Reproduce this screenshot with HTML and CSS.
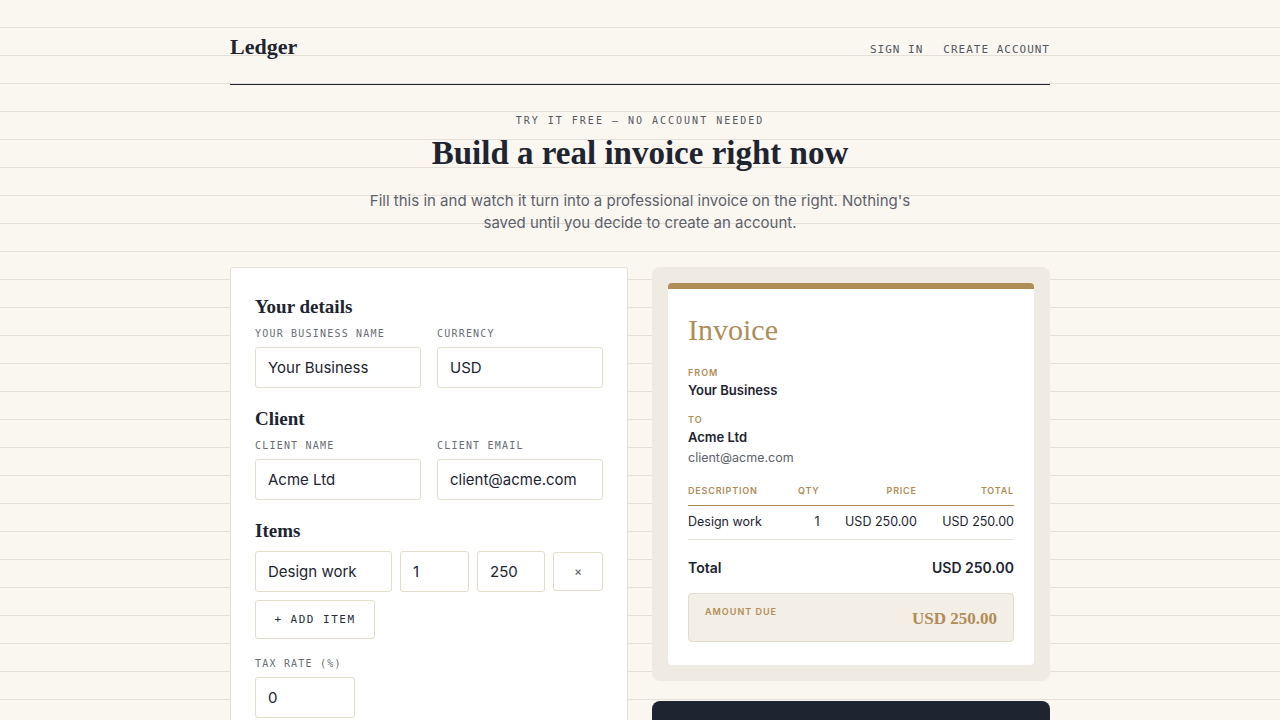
FILE: index.html
```html
<!DOCTYPE html>
<html lang="en">
<head>
<meta charset="utf-8">
<title>Ledger — Build a real invoice</title>
<link rel="stylesheet" href="styles.css">
</head>
<body>
<div class="page">
  <header class="topbar">
    <div class="logo">Ledger</div>
    <nav class="nav">
      <a href="#">Sign in</a>
      <a href="#">Create account</a>
    </nav>
  </header>

  <section class="hero">
    <div class="eyebrow">Try it free — no account needed</div>
    <h1>Build a real invoice right now</h1>
    <p>Fill this in and watch it turn into a professional invoice on the right. Nothing's saved until you decide to create an account.</p>
  </section>

  <main class="builder">
    <form class="form-card">
      <h2>Your details</h2>
      <div class="row2">
        <label class="field"><span class="lbl">Your business name</span><input class="inp" value="Your Business"></label>
        <label class="field"><span class="lbl">Currency</span><input class="inp" value="USD"></label>
      </div>
      <h2>Client</h2>
      <div class="row2">
        <label class="field"><span class="lbl">Client name</span><input class="inp" value="Acme Ltd"></label>
        <label class="field"><span class="lbl">Client email</span><input class="inp" value="client@acme.com"></label>
      </div>
      <h2>Items</h2>
      <div class="item-row">
        <input class="inp desc" value="Design work">
        <input class="inp qty" value="1">
        <input class="inp price" value="250">
        <button type="button" class="remove">×</button>
      </div>
      <button type="button" class="add">+ Add item</button>
      <label class="field tax"><span class="lbl">Tax rate (%)</span><input class="inp tax-inp" value="0"></label>
    </form>

    <div class="right">
      <div class="preview">
        <div class="invoice">
          <div class="inv-title">Invoice</div>
          <div class="party">
            <div class="ilbl">From</div>
            <div class="pname">Your Business</div>
          </div>
          <div class="party">
            <div class="ilbl">To</div>
            <div class="pname">Acme Ltd</div>
            <div class="pmail">client@acme.com</div>
          </div>
          <table class="lines">
            <thead>
              <tr><th class="l">Description</th><th class="r">Qty</th><th class="r">Price</th><th class="r">Total</th></tr>
            </thead>
            <tbody>
              <tr><td class="l">Design work</td><td class="r">1</td><td class="r">USD 250.00</td><td class="r">USD 250.00</td></tr>
            </tbody>
          </table>
          <div class="total"><span>Total</span><span>USD 250.00</span></div>
          <div class="due"><span class="due-lbl">Amount due</span><span class="due-val">USD 250.00</span></div>
        </div>
      </div>
      <div class="cta"></div>
    </div>
  </main>
</div>
</body>
</html>
```

FILE: styles.css
```css
* { box-sizing: border-box; }
html, body { margin: 0; padding: 0; }
body {
  background-color: #faf7f0;
  background-image: repeating-linear-gradient(to bottom, transparent 0, transparent 27px, #e4e0d7 27px, #e4e0d7 28px);
  font-family: Inter, "Noto Sans", sans-serif;
  color: #1e2430;
  height: 720px;
  overflow: hidden;
}
.page { width: 820px; margin: 0 auto; }

.topbar {
  display: flex;
  justify-content: space-between;
  align-items: center;
  height: 85px;
  padding-top: 10px;
  border-bottom: 1px solid #1e2430;
}
.logo {
  font-family: "Liberation Serif", "DejaVu Serif", serif;
  font-weight: bold;
  font-size: 22px;
  line-height: 28px;
}
.nav { display: flex; gap: 20px; margin-top: 4px; }
.nav a {
  font-family: "DejaVu Sans Mono", "Liberation Mono", monospace;
  font-size: 11px;
  letter-spacing: 1px;
  text-transform: uppercase;
  color: #545863;
  text-decoration: none;
}

.hero { text-align: center; padding-top: 29px; }
.eyebrow {
  font-family: "DejaVu Sans Mono", "Liberation Mono", monospace;
  font-size: 10px;
  letter-spacing: 2px;
  text-transform: uppercase;
  color: #545863;
  line-height: 14px;
}
.hero h1 {
  font-family: "Liberation Serif", "DejaVu Serif", serif;
  font-size: 33px;
  font-weight: bold;
  margin: 6px 0 0;
  line-height: 38px;
}
.hero p {
  width: 550px;
  margin: 18px auto 0;
  font-size: 15px;
  line-height: 22px;
  color: #5d616b;
}

.builder {
  display: grid;
  grid-template-columns: 398px 398px;
  justify-content: space-between;
  margin-top: 33px;
  align-items: start;
}

.form-card {
  background: #fff;
  border: 1px solid #e6e0d2;
  border-radius: 3px;
  padding: 27px 24px 40px;
}
.form-card h2 {
  font-family: "Liberation Serif", "DejaVu Serif", serif;
  font-size: 19px;
  font-weight: bold;
  margin: 0 0 8px;
  line-height: 24px;
}
.row2 {
  display: grid;
  grid-template-columns: 1fr 1fr;
  gap: 16px;
  margin-bottom: 19px;
}
.field { display: flex; flex-direction: column; }
.lbl {
  font-family: "DejaVu Sans Mono", "Liberation Mono", monospace;
  font-size: 10px;
  letter-spacing: 1.2px;
  text-transform: uppercase;
  color: #6a6d75;
  line-height: 14px;
  margin-bottom: 6px;
}
.inp {
  height: 41px;
  border: 1px solid #e3ddcc;
  border-radius: 3px;
  padding: 0 12px;
  font-family: Inter, "Noto Sans", sans-serif;
  font-size: 15px;
  color: #1e2430;
  background: #fff;
  width: 100%;
  min-width: 0;
}
.item-row {
  display: grid;
  grid-template-columns: 137px 69px 68px 50px;
  gap: 8px;
  align-items: center;
}
.remove {
  height: 39px;
  border: 1px solid #e3ddcc;
  border-radius: 3px;
  background: #fff;
  font-size: 12px;
  color: #4a4e57;
  font-family: "DejaVu Sans Mono", monospace;
}
.add {
  margin-top: 8px;
  width: 120px;
  height: 39px;
  border: 1px solid #e3ddcc;
  border-radius: 3px;
  background: #fff;
  font-family: "DejaVu Sans Mono", "Liberation Mono", monospace;
  font-size: 11px;
  letter-spacing: 1.5px;
  text-transform: uppercase;
  color: #2a2e37;
}
.tax { margin-top: 18px; }
.tax-inp { width: 100px; }

.right { display: flex; flex-direction: column; gap: 20px; }
.preview {
  background: #efeae2;
  border-radius: 8px;
  padding: 16px;
}
.invoice {
  background: #fff;
  border-top: 6px solid #b08d57;
  border-radius: 4px;
  padding: 24px 20px 23px;
}
.inv-title {
  font-family: "Liberation Serif", "DejaVu Serif", serif;
  font-size: 30px;
  color: #b08d57;
  line-height: 34px;
}
.party { margin-top: 20px; }
.party + .party { margin-top: 15px; }
.ilbl {
  font-size: 9px;
  font-weight: 600;
  letter-spacing: 1px;
  text-transform: uppercase;
  color: #b08d57;
  line-height: 12px;
}
.pname { font-size: 13px; font-weight: 600; line-height: 18px; margin-top: 2px; }
.pmail { font-size: 12.5px; color: #5d616b; line-height: 18px; margin-top: 3px; }

.lines {
  width: 100%;
  border-collapse: collapse;
  margin-top: 18px;
}
.lines th {
  font-size: 9px;
  font-weight: 600;
  letter-spacing: 0.8px;
  text-transform: uppercase;
  color: #b08d57;
  padding: 0 0 8px;
  border-bottom: 1px solid #b08d57;
  line-height: 12px;
}
.lines td {
  font-size: 12.5px;
  padding: 7px 0 9px;
  border-bottom: 1px solid #e5e1d8;
  line-height: 17px;
}
.l { text-align: left; }
.r { text-align: right; }
.lines th:nth-child(1) { width: 110px; }
.lines th:nth-child(2) { width: 20px; }
.total {
  display: flex;
  justify-content: space-between;
  font-size: 14px;
  font-weight: 600;
  margin-top: 18px;
  line-height: 20px;
}
.due {
  margin-top: 15px;
  background: #f3eee6;
  border: 1px solid #e4dccd;
  border-radius: 4px;
  height: 49px;
  padding: 12px 16px 0;
  display: flex;
  justify-content: space-between;
  align-items: flex-start;
}
.due-lbl {
  font-size: 9px;
  font-weight: 600;
  letter-spacing: 1px;
  text-transform: uppercase;
  color: #b08d57;
  line-height: 12px;
}
.due-val {
  font-family: "Liberation Serif", "DejaVu Serif", serif;
  font-size: 17px;
  font-weight: bold;
  color: #b08d57;
  line-height: 20px;
  margin-top: 3px;
}
.cta {
  background: #1e2430;
  border-radius: 8px;
  height: 120px;
}
```
